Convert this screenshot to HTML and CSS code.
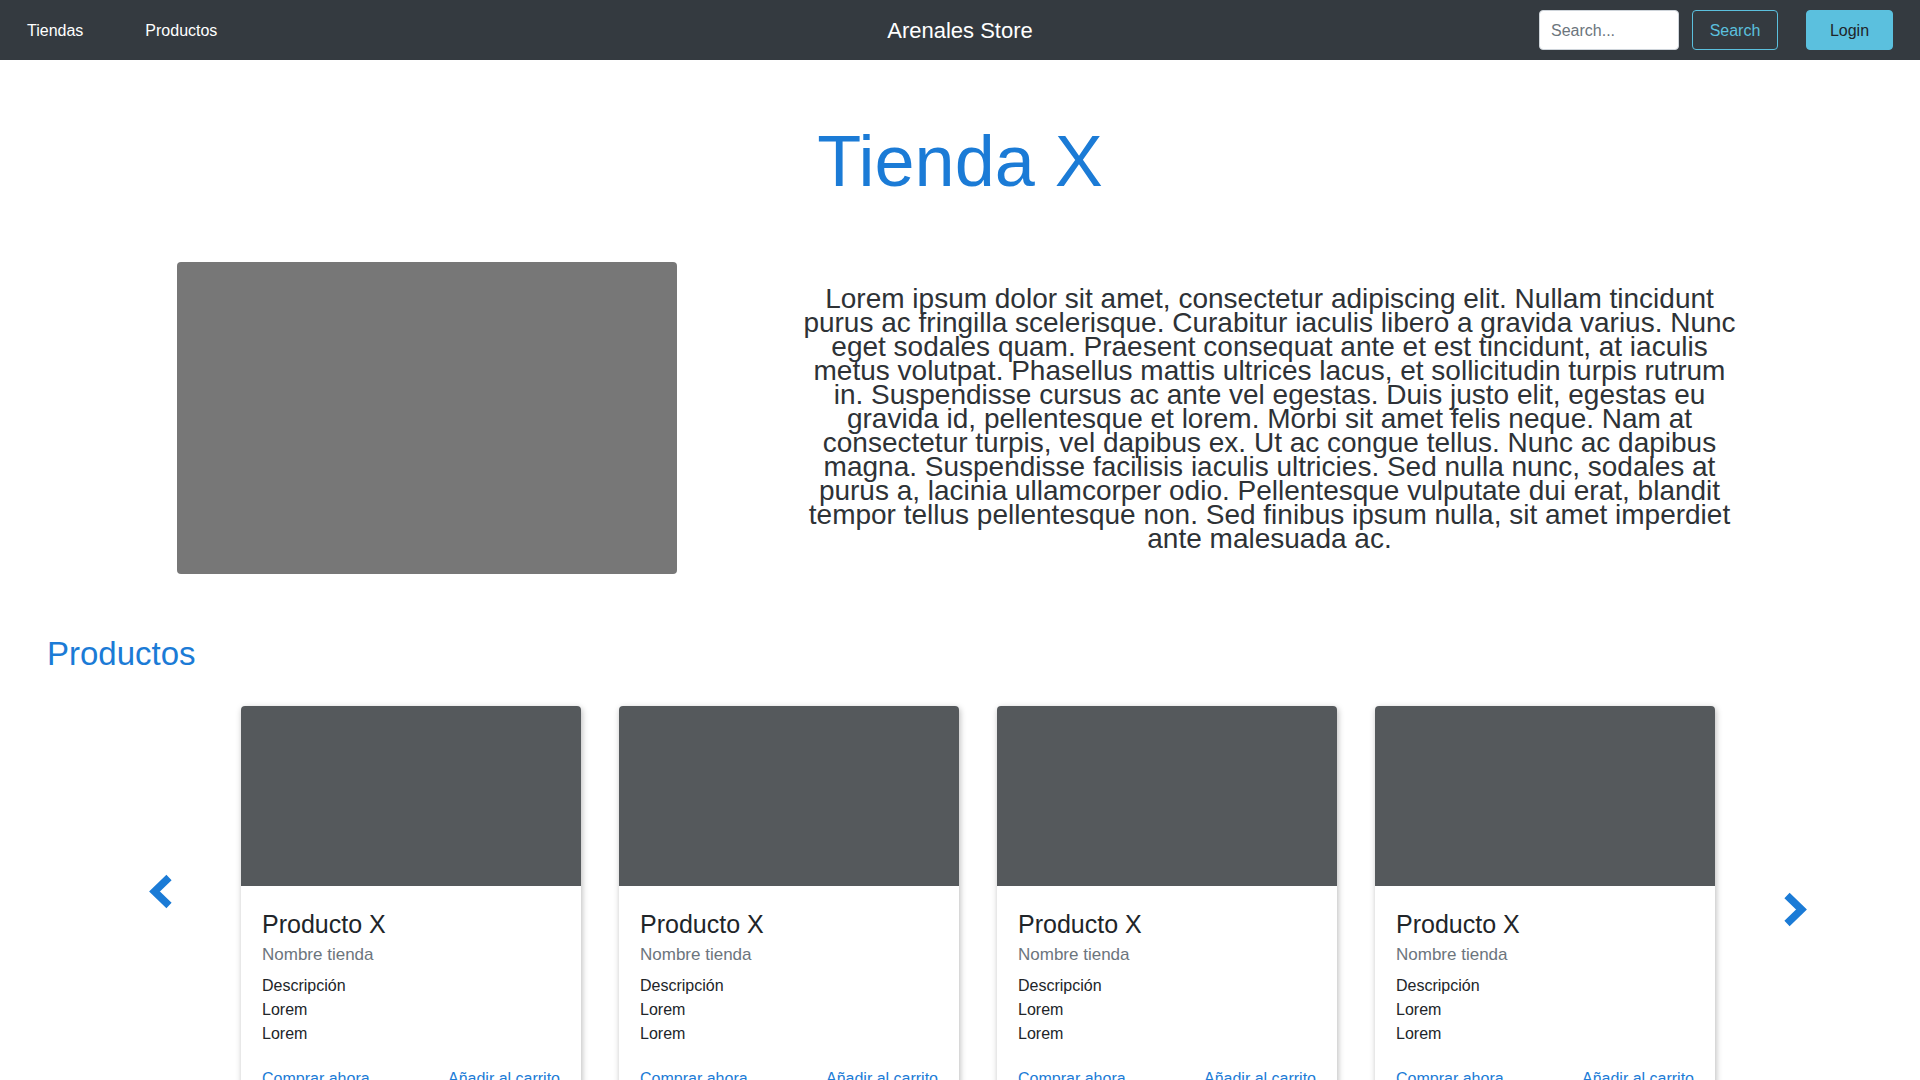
FILE: index.html
```html
<!DOCTYPE html>
<html lang="es">
<head>
<meta charset="utf-8">
<title>Arenales Store</title>
<link rel="stylesheet" href="styles.css">
</head>
<body>
<nav class="navbar">
  <div class="nav-left">
    <a class="nav-link" href="#">Tiendas</a>
    <a class="nav-link" href="#">Productos</a>
  </div>
  <div class="brand">Arenales Store</div>
  <div class="nav-right">
    <input class="search-input" type="text" placeholder="Search...">
    <button class="btn-search">Search</button>
    <button class="btn-login">Login</button>
  </div>
</nav>
<main>
  <h1 class="store-title">Tienda X</h1>
  <section class="hero">
    <div class="hero-img"></div>
    <p class="hero-text">Lorem ipsum dolor sit amet, consectetur adipiscing elit. Nullam tincidunt purus ac fringilla scelerisque. Curabitur iaculis libero a gravida varius. Nunc eget sodales quam. Praesent consequat ante et est tincidunt, at iaculis metus volutpat. Phasellus mattis ultrices lacus, et sollicitudin turpis rutrum in. Suspendisse cursus ac ante vel egestas. Duis justo elit, egestas eu gravida id, pellentesque et lorem. Morbi sit amet felis neque. Nam at consectetur turpis, vel dapibus ex. Ut ac congue tellus. Nunc ac dapibus magna. Suspendisse facilisis iaculis ultricies. Sed nulla nunc, sodales at purus a, lacinia ullamcorper odio. Pellentesque vulputate dui erat, blandit tempor tellus pellentesque non. Sed finibus ipsum nulla, sit amet imperdiet ante malesuada ac.</p>
  </section>
  <h2 class="section-title">Productos</h2>
  <section class="carousel">
    <button class="ctrl ctrl-prev" aria-label="Anterior">
      <svg width="25" height="35" viewBox="0 0 25 35"><polyline points="21,3.5 6.5,17.5 21,31.5" fill="none" stroke="#1b7bd6" stroke-width="7.5" stroke-linejoin="miter" stroke-miterlimit="10"/></svg>
    </button>
    <div class="cards">
      <div class="card">
        <div class="card-img"></div>
        <div class="card-body">
          <h4 class="card-title">Producto X</h4>
          <div class="card-subtitle">Nombre tienda</div>
          <div class="card-text">Descripción</div>
          <div class="card-text">Lorem</div>
          <div class="card-text">Lorem</div>
          <div class="card-links"><a href="#">Comprar ahora</a><a href="#">Añadir al carrito</a></div>
        </div>
      </div>
      <div class="card">
        <div class="card-img"></div>
        <div class="card-body">
          <h4 class="card-title">Producto X</h4>
          <div class="card-subtitle">Nombre tienda</div>
          <div class="card-text">Descripción</div>
          <div class="card-text">Lorem</div>
          <div class="card-text">Lorem</div>
          <div class="card-links"><a href="#">Comprar ahora</a><a href="#">Añadir al carrito</a></div>
        </div>
      </div>
      <div class="card">
        <div class="card-img"></div>
        <div class="card-body">
          <h4 class="card-title">Producto X</h4>
          <div class="card-subtitle">Nombre tienda</div>
          <div class="card-text">Descripción</div>
          <div class="card-text">Lorem</div>
          <div class="card-text">Lorem</div>
          <div class="card-links"><a href="#">Comprar ahora</a><a href="#">Añadir al carrito</a></div>
        </div>
      </div>
      <div class="card">
        <div class="card-img"></div>
        <div class="card-body">
          <h4 class="card-title">Producto X</h4>
          <div class="card-subtitle">Nombre tienda</div>
          <div class="card-text">Descripción</div>
          <div class="card-text">Lorem</div>
          <div class="card-text">Lorem</div>
          <div class="card-links"><a href="#">Comprar ahora</a><a href="#">Añadir al carrito</a></div>
        </div>
      </div>
    </div>
    <button class="ctrl ctrl-next" aria-label="Siguiente">
      <svg width="25" height="35" viewBox="0 0 25 35"><polyline points="4,3.5 18.5,17.5 4,31.5" fill="none" stroke="#1b7bd6" stroke-width="7.5" stroke-linejoin="miter" stroke-miterlimit="10"/></svg>
    </button>
  </section>
</main>
</body>
</html>
```
FILE: styles.css
```css
* { box-sizing: border-box; }

body {
  margin: 0;
  font-family: "Liberation Sans", Arial, Helvetica, sans-serif;
  font-size: 16px;
  line-height: 1.5;
  color: #212529;
  background: #fff;
}

.navbar {
  display: grid;
  grid-template-columns: 1fr auto 1fr;
  align-items: center;
  height: 60px;
  background: #343a40;
  padding: 0 27px;
}

.nav-left {
  display: flex;
  gap: 62px;
}

.nav-link {
  color: #fff;
  text-decoration: none;
  font-size: 16px;
  line-height: 24px;
  padding-top: 1px;
}

.brand {
  color: #fff;
  font-size: 22px;
  line-height: 1.5;
}

.nav-right {
  justify-self: end;
  display: flex;
  align-items: center;
}

.search-input {
  width: 140px;
  height: 40px;
  border: 1px solid #ced4da;
  border-radius: 4px;
  padding: 1px 11px 0;
  font-family: inherit;
  font-size: 16px;
  color: #495057;
  background: #fff;
}

.search-input::placeholder { color: #6c757d; }

.btn-search {
  margin-left: 13px;
  width: 86px;
  height: 40px;
  border: 1px solid #5bc0de;
  border-radius: 4px;
  background: transparent;
  color: #5bc0de;
  font-family: inherit;
  font-size: 16px;
  padding: 1px 0 0;
}

.btn-login {
  margin-left: 28px;
  width: 87px;
  height: 40px;
  border: 1px solid #5bc0de;
  border-radius: 4px;
  background: #5bc0de;
  color: #212529;
  font-family: inherit;
  font-size: 16px;
  padding: 1px 0 0;
}

.store-title {
  margin: 58px 0 0;
  text-align: center;
  font-size: 72px;
  font-weight: 400;
  line-height: 1.2;
  color: #1b7bd6;
}

.hero {
  display: flex;
  align-items: center;
  gap: 122px;
  padding-left: 177px;
  margin-top: 58px;
}

.hero-img {
  flex: none;
  width: 500px;
  height: 312px;
  background: #777777;
  border-radius: 4px;
}

.hero-text {
  flex: none;
  width: 941px;
  margin: 0;
  padding-top: 2px;
  font-size: 28px;
  line-height: 24px;
  text-align: center;
  color: #2e3236;
}

.section-title {
  margin: 60px 0 0;
  padding-left: 47px;
  font-size: 33px;
  font-weight: 400;
  line-height: 1.2;
  color: #1b7bd6;
}

.carousel {
  display: flex;
  align-items: flex-start;
  margin-top: 32px;
  padding-left: 148px;
  padding-bottom: 40px;
}

.ctrl {
  flex: none;
  width: 25px;
  height: 35px;
  padding: 0;
  border: 0;
  background: transparent;
  display: block;
}

.ctrl svg { display: block; }

.ctrl-prev { margin-top: 168px; margin-right: 68px; }
.ctrl-next { margin-top: 186px; margin-left: 68px; }

.cards {
  display: flex;
  gap: 38px;
}

.card {
  width: 340px;
  background: #fff;
  border-radius: 4px;
  box-shadow: 1px 2px 6px rgba(0, 0, 0, 0.28);
  overflow: hidden;
}

.card-img {
  height: 180px;
  background: #55595c;
}

.card-body {
  padding: 23px 21px 20px 21px;
}

.card-title {
  margin: 0;
  font-size: 25px;
  font-weight: 400;
  line-height: 1.2;
  color: #212529;
}

.card-subtitle {
  margin-top: 3px;
  margin-bottom: 7px;
  font-size: 17px;
  line-height: 1.5;
  color: #6c757d;
}

.card-text {
  font-size: 16px;
  line-height: 24px;
}

.card-links {
  display: flex;
  justify-content: space-between;
  margin-top: 21px;
}

.card-links a {
  color: #1b7bd6;
  text-decoration: none;
}
```
